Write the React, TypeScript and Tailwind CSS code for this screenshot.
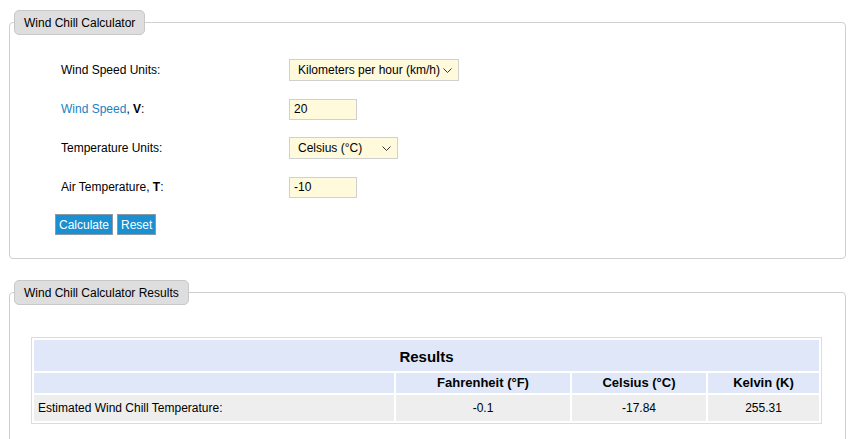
import React from "react";

const font = { fontFamily: '"Liberation Sans", Arial, sans-serif' };

function Chevron() {
  return (
    <svg width="9" height="6" viewBox="0 0 9 6" className="pointer-events-none absolute right-[7px] top-[9px]">
      <polyline points="0.5,0.5 4.5,4.5 8.5,0.5" fill="none" stroke="#333" strokeWidth="1" />
    </svg>
  );
}

function Select({ value, width }: { value: string; width: string }) {
  return (
    <div className={`relative h-[22px] ${width}`}>
      <div className="flex h-full items-center border border-[#d0d0d0] bg-[#fffadb] pl-[8px] text-[12px] text-black">
        {value}
      </div>
      <Chevron />
    </div>
  );
}

function TextInput({ value }: { value: string }) {
  return (
    <div className="flex h-[21px] w-[68px] items-center border border-[#d0d0d0] bg-[#fffadb] pl-[4px] text-[12px] text-black">
      {value}
    </div>
  );
}

function Legend({ children }: { children: React.ReactNode }) {
  return (
    <legend className="ml-[4px] flex h-[25px] items-center rounded-[5px] border border-[#c8c8c8] bg-[#dedede] px-[9px] text-[12px] text-black">
      {children}
    </legend>
  );
}

export default function App() {
  return (
    <div className="min-h-[439px] bg-white pl-[9px] pr-[8px] pt-[10px]" style={font}>
      <fieldset className="rounded-[4px] border border-[#cfcfcf]">
        <Legend>Wind Chill Calculator</Legend>
        <div className="pl-[45px] pb-[23px] pt-[24px]">
          <div className="flex flex-col gap-[17px] pl-[6px] text-[12px] text-black">
            <div className="flex h-[22px] items-center">
              <div className="w-[228px]">Wind Speed Units:</div>
              <Select value="Kilometers per hour (km/h)" width="w-[170px]" />
            </div>
            <div className="flex h-[22px] items-center">
              <div className="w-[228px]">
                <span className="text-[#1a7fc4]">Wind Speed</span>, <b>V</b>:
              </div>
              <TextInput value="20" />
            </div>
            <div className="flex h-[22px] items-center">
              <div className="w-[228px]">Temperature Units:</div>
              <Select value="Celsius (°C)" width="w-[109px]" />
            </div>
            <div className="flex h-[22px] items-center">
              <div className="w-[228px]">
                Air Temperature, <b>T</b>:
              </div>
              <TextInput value="-10" />
            </div>
          </div>
          <div className="mt-[16px] flex gap-[4px]">
            <button className="h-[21px] border border-[#8a9aa6] bg-[#1a8fd2] px-[3px] text-[12px] text-white">
              Calculate
            </button>
            <button className="h-[21px] border border-[#8a9aa6] bg-[#1a8fd2] px-[3px] text-[12px] text-white">
              Reset
            </button>
          </div>
        </div>
      </fieldset>

      <fieldset className="mt-[21px] rounded-[4px] border border-[#cfcfcf]">
        <Legend>Wind Chill Calculator Results</Legend>
        <div className="px-[21px] pb-[20px] pt-[32px]">
          <table className="w-[791px] border-separate border-spacing-[2px] border border-[#dcdcdc] text-[12px] text-black">
            <tbody>
              <tr>
                <td colSpan={4} className="h-[31px] bg-[#dfe7f8] pt-[3px] text-center text-[15px] font-bold">
                  Results
                </td>
              </tr>
              <tr className="h-[20px] bg-[#dfe7f8] text-center text-[13px] font-bold">
                <td className="w-[360px]"></td>
                <td className="w-[174px]">Fahrenheit (°F)</td>
                <td className="w-[134px]">Celsius (°C)</td>
                <td>Kelvin (K)</td>
              </tr>
              <tr className="h-[26px] bg-[#eeeeee]">
                <td className="pl-[4px]">Estimated Wind Chill Temperature:</td>
                <td className="text-center">-0.1</td>
                <td className="text-center">-17.84</td>
                <td className="text-center">255.31</td>
              </tr>
            </tbody>
          </table>
        </div>
      </fieldset>
    </div>
  );
}
